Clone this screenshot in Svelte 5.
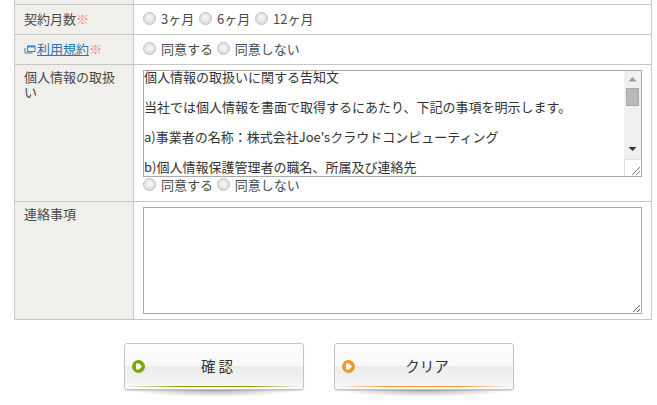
<script>
  const notice = `個人情報の取扱いに関する告知文

当社では個人情報を書面で取得するにあたり、下記の事項を明示します。

a)事業者の名称：株式会社Joe'sクラウドコンピューティング

b)個人情報保護管理者の職名、所属及び連絡先
個人情報保護管理者　管理部長

c)個人情報の利用目的
お申込み内容の確認のため

d)個人情報の第三者提供について
第三者に提供することはありません。

e)個人情報の委託について
委託することはありません。

f)個人情報の開示等の請求について
管理部までお問い合わせください。`;

  function nudge(node) {
    node.scrollTop = 2;
  }
</script>

<div class="page">
  <table class="form">
    <colgroup>
      <col class="c1" />
      <col />
    </colgroup>
    <tbody>
      <tr class="stub"><th></th><td></td></tr>
      <tr class="line months">
        <th>契約月数<span class="req">※</span></th>
        <td>
          <label><input type="radio" name="term" /> 3ヶ月</label>
          <label><input type="radio" name="term" /> 6ヶ月</label>
          <label><input type="radio" name="term" /> 12ヶ月</label>
        </td>
      </tr>
      <tr class="line">
        <th>
          <svg class="ext" width="12" height="10" viewBox="0 0 12 10" aria-hidden="true">
            <path d="M3.5 1h7.5v5.5H3.5z" fill="none" stroke="#2b86c5" stroke-width="1" />
            <path d="M3.5 1.6h7.5" fill="none" stroke="#2b86c5" stroke-width="1.6" />
            <path d="M1 3v5h7.5" fill="none" stroke="#2b86c5" stroke-width="1" />
          </svg><a href="#terms">利用規約</a><span class="req">※</span>
        </th>
        <td>
          <label><input type="radio" name="terms" /> 同意する</label>
          <label><input type="radio" name="terms" /> 同意しない</label>
        </td>
      </tr>
      <tr class="privacy">
        <th>個人情報の取扱い</th>
        <td>
          <div class="notice-wrap">
            <textarea class="notice" readonly value={notice} use:nudge></textarea>
            <svg class="scrollbar" width="17" height="105" viewBox="0 0 17 105" aria-hidden="true">
              <rect width="17" height="88" fill="#f0f0f0" />
              <rect y="88" width="17" height="17" fill="#fff" />
              <path d="M0.5 88.5H17M0.5 88V105" stroke="#e2e2e2" fill="none" />
              <path d="M8.5 6 12.5 10.5H4.5z" fill="#9a9a9a" />
              <rect x="2.5" y="17.5" width="12" height="17" fill="#b9b9b9" stroke="#a8a8a8" />
              <path d="M4.5 76H12.5L8.5 80z" fill="#333" />
              <path d="M8 104 16 96M12 104 16 100" stroke="#808080" fill="none" />
            </svg>
          </div>
          <div class="choices">
            <label><input type="radio" name="privacy" /> 同意する</label>
            <label><input type="radio" name="privacy" /> 同意しない</label>
          </div>
        </td>
      </tr>
      <tr class="memo">
        <th>連絡事項</th>
        <td><textarea class="memo-box"></textarea></td>
      </tr>
    </tbody>
  </table>

  <div class="actions">
    <button class="btn ok" type="button">
      <svg width="13" height="13" viewBox="0 0 13 13" aria-hidden="true">
        <circle cx="6.5" cy="6.5" r="6.5" fill="#7aa800" />
        <path d="M4 3.5h3L10 6.5 7 9.5H4z" fill="#fff" />
      </svg>
      <span>確 認</span>
    </button>
    <button class="btn clear" type="button">
      <svg width="13" height="13" viewBox="0 0 13 13" aria-hidden="true">
        <circle cx="6.5" cy="6.5" r="6.5" fill="#ec9a2e" />
        <path d="M4 3.5h3L10 6.5 7 9.5H4z" fill="#fff" />
      </svg>
      <span>クリア</span>
    </button>
  </div>
</div>

<style>
  :global(body) {
    margin: 0;
    background: #fff;
  }
  .page {
    width: 657px;
    height: 405px;
    overflow: hidden;
    box-sizing: border-box;
    padding-left: 14px;
    font-family: "Noto Sans CJK JP", "Noto Sans", sans-serif;
    font-size: 13px;
    line-height: 15px;
    color: #4a4a4a;
  }
  .form {
    width: 638px;
    border-collapse: collapse;
    table-layout: fixed;
  }
  .c1 {
    width: 119px;
  }
  th,
  td {
    border: 1px solid #c9c7c2;
    text-align: left;
    vertical-align: top;
    font-weight: 400;
    padding: 6px 9px;
  }
  th {
    background: #f1efeb;
  }
  .stub th,
  .stub td {
    height: 4px;
    padding: 0;
    border-top: 0;
  }
  .line th,
  .line td {
    height: 17px;
    padding-top: 6px;
    padding-bottom: 6px;
  }
  .req {
    color: #ea8a80;
  }
  a {
    color: #2279b5;
    text-decoration: underline;
  }
  .ext {
    vertical-align: -1px;
    margin-right: 1px;
  }
  label {
    margin-right: 1px;
  }
  .months label {
    margin-right: 2px;
  }
  input[type="radio"] {
    appearance: none;
    width: 13px;
    height: 13px;
    margin: 0 2px 0 0;
    vertical-align: -1px;
    border-radius: 50%;
    border: 1px solid #c2c2c2;
    background: radial-gradient(circle at 50% 45%, #f2f2f2 0 25%, #d6d6d6 80%);
    box-sizing: border-box;
  }
  textarea {
    display: block;
    box-sizing: border-box;
    width: 499px;
    margin: 0;
    border: 1px solid #a9a9a9;
    padding: 0;
    font: inherit;
    color: #333;
    background: #fff;
    outline: none;
  }
  .notice-wrap {
    position: relative;
    width: 499px;
  }
  .notice {
    height: 107px;
    overflow: hidden;
    resize: none;
  }
  .scrollbar {
    position: absolute;
    top: 1px;
    right: 1px;
    pointer-events: none;
  }
  .privacy td {
    padding-top: 5px;
    padding-bottom: 9px;
  }
  .privacy th {
    height: 122px;
    padding-top: 4px;
    padding-bottom: 8px;
  }
  .memo th {
    padding-top: 4px;
  }
  .memo td {
    padding-top: 5px;
    padding-bottom: 5px;
  }
  .memo-box {
    height: 107px;
    resize: both;
  }
  .actions {
    display: flex;
    gap: 30px;
    margin: 23px 0 0 110px;
  }
  .btn {
    position: relative;
    display: flex;
    align-items: center;
    width: 180px;
    height: 47px;
    padding: 0 0 0 7px;
    box-sizing: border-box;
    border: 1px solid #c4c4c4;
    border-radius: 3px;
    background: linear-gradient(#fdfdfd 0, #f8f8f8 50%, #ececec 50%, #f4f4f4 88%, #fbfbfb 100%);
    box-shadow: 0 1px 1px rgba(0, 0, 0, 0.15);
    font: inherit;
    font-size: 14.5px;
    color: #333;
  }
  .btn::before {
    content: "";
    position: absolute;
    left: 3px;
    right: 3px;
    bottom: 2px;
    height: 1px;
    background: var(--accent);
  }
  .btn::after {
    content: "";
    position: absolute;
    left: 4px;
    right: 4px;
    top: 100%;
    height: 7px;
    margin-top: 1px;
    background: radial-gradient(ellipse 50% 100% at 50% 0, rgba(0, 0, 0, 0.3), rgba(0, 0, 0, 0));
  }
  .btn svg {
    flex: none;
  }
  .btn span {
    flex: 1;
    text-align: center;
    padding-right: 14px;
    margin-top: -2px;
  }
  .ok {
    --accent: linear-gradient(90deg, #f0f0f0, #7aa800 30%, #7aa800 70%, #f0f0f0);
  }
  .clear {
    --accent: linear-gradient(90deg, #f0f0f0, #ec9a2e 30%, #ec9a2e 70%, #f0f0f0);
  }
</style>
